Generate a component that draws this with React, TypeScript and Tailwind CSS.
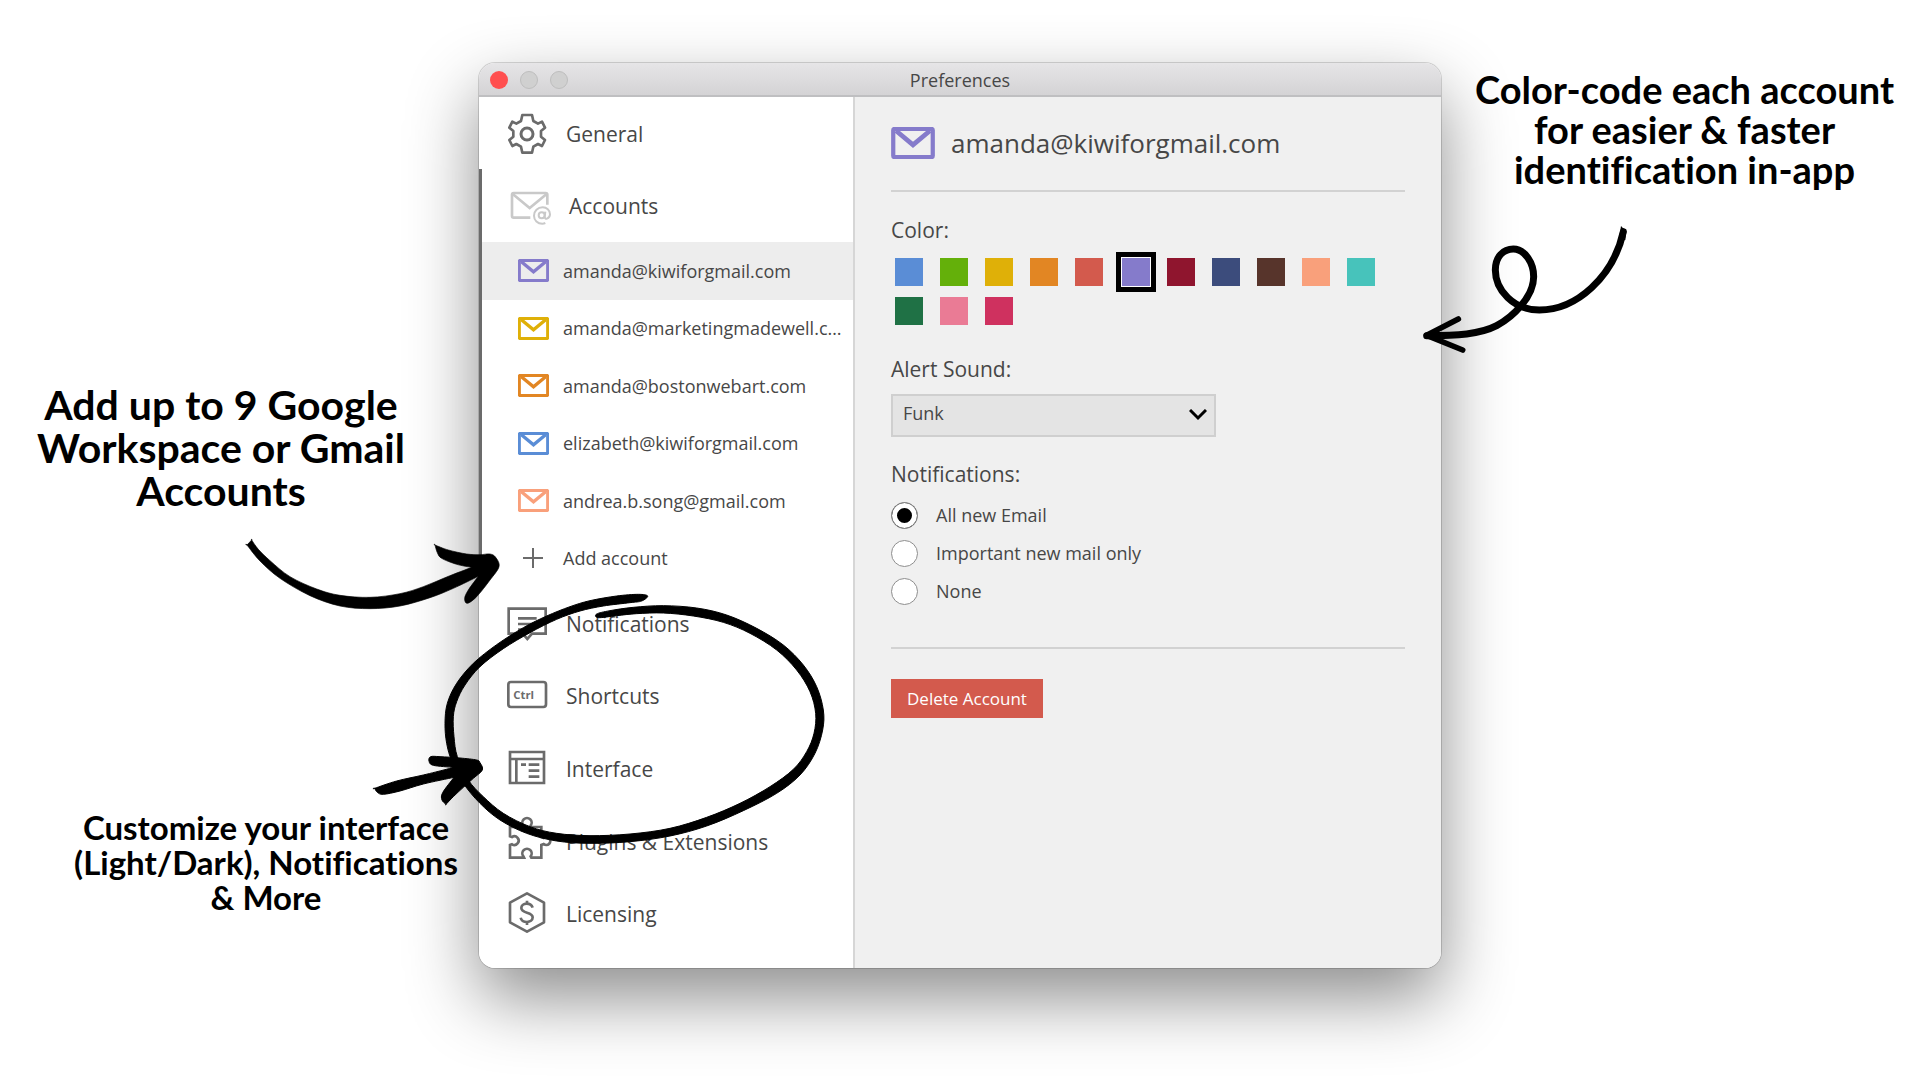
import type { ReactNode } from "react";

type Point = [number, number];

/* Closed Catmull-Rom curve through the given points, used for the brush strokes. */
function brush(points: Point[]): string {
  const n = points.length;
  let d = `M${points[0][0]} ${points[0][1]}`;
  for (let i = 0; i < n; i++) {
    const p0 = points[(i - 1 + n) % n];
    const p1 = points[i];
    const p2 = points[(i + 1) % n];
    const p3 = points[(i + 2) % n];
    d += `C${p1[0] + (p2[0] - p0[0]) / 6} ${p1[1] + (p2[1] - p0[1]) / 6} ${p2[0] - (p3[0] - p1[0]) / 6} ${p2[1] - (p3[1] - p1[1]) / 6} ${p2[0]} ${p2[1]}`;
  }
  return d + "Z";
}

const accountsArrow = brush([
  [741, 525], [741, 525], [755, 510], [755, 510], [775, 538], [810, 572], [870, 620], [950, 657], [1020, 676],
  [1110, 682], [1200, 671], [1270, 650], [1340, 621], [1415, 592], [1415, 592], [1370, 583], [1325, 565],
  [1312, 548], [1305, 525], [1305, 525], [1345, 540], [1400, 552], [1440, 554], [1470, 552], [1487, 562],
  [1497, 590], [1470, 630], [1430, 680], [1402, 700], [1394, 685], [1405, 660], [1435, 619], [1435, 619],
  [1360, 655], [1290, 683], [1200, 708], [1110, 716], [1020, 708], [930, 677], [840, 625], [780, 573],
]);

const ring = brush([
  [653, 78], [625, 73], [560, 78], [480, 92], [420, 110], [350, 138], [280, 173], [200, 224], [130, 280],
  [80, 340], [52, 400], [45, 460], [50, 520], [66, 575], [100, 640], [150, 700], [210, 750], [290, 790],
  [380, 813], [480, 820], [600, 815], [720, 798], [830, 768], [940, 722], [1040, 670], [1110, 615],
  [1155, 550], [1178, 480], [1180, 420], [1160, 350], [1120, 285], [1060, 225], [980, 175], [890, 135],
  [800, 114], [700, 107], [610, 112], [540, 122], [500, 132], [505, 143], [560, 137], [620, 131], [700, 129],
  [790, 138], [880, 157], [960, 190], [1040, 240], [1100, 300], [1140, 365], [1157, 430], [1152, 490],
  [1130, 545], [1090, 598], [1020, 650], [930, 700], [830, 742], [720, 775], [600, 792], [480, 797],
  [380, 790], [300, 770], [220, 730], [160, 680], [115, 630], [82, 560], [72, 500], [70, 440], [80, 395],
  [105, 345], [150, 290], [220, 236], [300, 188], [380, 148], [450, 123], [520, 108], [600, 98], [635, 93],
]);

const interfaceArrow = brush([
  [1004, 175], [1004, 175], [1070, 153], [1150, 135], [1215, 119], [1240, 112], [1240, 112], [1180, 106],
  [1167, 93], [1172, 80], [1200, 80], [1260, 84], [1310, 90], [1320, 98], [1327, 120], [1300, 145],
  [1270, 172], [1240, 200], [1218, 223], [1218, 223], [1206, 210], [1208, 188], [1242, 142], [1242, 142],
  [1150, 162], [1080, 183], [1030, 193], [1012, 187],
]);

const colors = {
  blue: "text-[#5a8dd6]",
  yellow: "text-[#dfb008]",
  orange: "text-[#e28623]",
  purple: "text-[#857bcb]",
  peach: "text-[#f9a07b]",
};

const accounts = [
  { email: "amanda@kiwiforgmail.com", color: colors.purple, active: true },
  { email: "amanda@marketingmadewell.com", color: colors.yellow, active: false },
  { email: "amanda@bostonwebart.com", color: colors.orange, active: false },
  { email: "elizabeth@kiwiforgmail.com", color: colors.blue, active: false },
  { email: "andrea.b.song@gmail.com", color: colors.peach, active: false },
];

const swatches = [
  { name: "Blue", bg: "bg-[#5a8dd6]" },
  { name: "Green", bg: "bg-[#64b00a]" },
  { name: "Yellow", bg: "bg-[#dfb008]" },
  { name: "Orange", bg: "bg-[#e28623]" },
  { name: "Red", bg: "bg-[#d35a4d]" },
  { name: "Purple", bg: "bg-[#857bcb]" },
  { name: "Maroon", bg: "bg-[#8f152e]" },
  { name: "Navy", bg: "bg-[#3c4c7c]" },
  { name: "Brown", bg: "bg-[#57342b]" },
  { name: "Peach", bg: "bg-[#f9a07b]" },
  { name: "Teal", bg: "bg-[#47c3bb]" },
  { name: "Forest", bg: "bg-[#1f7145]" },
  { name: "Pink", bg: "bg-[#ea7b95]" },
  { name: "Crimson", bg: "bg-[#cf315f]" },
];

function NavIcon({ viewBox, className = "text-[#6b6b6b]", children }: { viewBox: string; className?: string; children: ReactNode }) {
  return (
    <svg
      viewBox={viewBox}
      className={`h-[42px] w-10 shrink-0 overflow-visible ${className}`}
      fill="none"
      stroke="currentColor"
      strokeWidth="8"
      aria-hidden="true"
    >
      {children}
    </svg>
  );
}

function NavItem({ icon, label }: { icon: ReactNode; label: string }) {
  return (
    <button type="button" className="flex w-full items-center gap-[19px] pt-px pl-7 text-left text-[21px] leading-7">
      {icon}
      {label}
    </button>
  );
}

function Mail({ className }: { className: string }) {
  return (
    <svg viewBox="0 0 92 68" className={`shrink-0 ${className}`} fill="none" stroke="currentColor" aria-hidden="true">
      <rect x="4" y="4" width="84" height="60" rx="3" strokeWidth="9" />
      <path d="M10 8L46 38L82 8" strokeWidth="10" />
    </svg>
  );
}

const gear = (
  <NavIcon viewBox="111 186 120 126">
    <path
      strokeLinejoin="round"
      d="M157 192H186L190 210L204 218L216 212L225 230L213 240V257L225 267L216 285L204 279L190 287L186 305H157L153 287L139 279L127 285L118 267L130 257V240L118 230L127 212L139 218L153 210Z"
    />
    <circle cx="171" cy="249" r="18" strokeWidth="9" />
  </NavIcon>
);

const accountsIcon = (
  <NavIcon viewBox="120 405 120 126" className="text-[#c9c9c9]">
    <path d="M232 464V434Q232 429 227 429H131Q126 429 126 434V498Q126 503 131 503H181" />
    <path d="M129 433L179 474L229 433" />
    <circle cx="215" cy="496" r="9" strokeWidth="6" />
    <path d="M226 485L224 500Q225 508 231 506C237 504 240 499 240 493C240 480 230 472 218 472C203 472 192 483 192 497C192 511 203 521 217 521Q222 521 226 519" strokeWidth="6" />
  </NavIcon>
);

const lowerNav = [
  {
    label: "Notifications",
    icon: (
      <NavIcon viewBox="231 97 120 126">
        <path d="M236 114H347V189H306L292 205L278 189H236Z" />
        <path d="M264 143H320M264 160H320M264 177H300" />
      </NavIcon>
    ),
  },
  {
    label: "Shortcuts",
    icon: (
      <NavIcon viewBox="231 315 120 126">
        <rect x="235" y="336" width="113" height="75" rx="8" />
        <text x="250" y="388" fontSize="34" fontWeight="700" fill="currentColor" stroke="none">
          Ctrl
        </text>
      </NavIcon>
    ),
  },
  {
    label: "Interface",
    icon: (
      <NavIcon viewBox="231 533 120 126">
        <path d="M240 545H342V638H240ZM240 566H342M259 566V638" />
        <path d="M273 583H288M296 583H328M296 601H328M296 619H328" />
      </NavIcon>
    ),
  },
  {
    label: "Plugins & Extensions",
    icon: (
      <NavIcon viewBox="111 180 120 126">
        <path d="M120 198H158L160 194A14 14 0 1 1 182 194L184 198H214V228L221 231A12 12 0 1 1 221 249L214 252V290H184L182 286A14 14 0 1 0 160 286L162 290H120V252L126 250A13 13 0 1 0 126 228L120 226Z" />
      </NavIcon>
    ),
  },
  {
    label: "Licensing",
    icon: (
      <NavIcon viewBox="111 398 120 126">
        <path d="M171 399L222 427V486L171 514L120 486V427Z" strokeLinejoin="round" />
        <path d="M188 442C185 433 178 430 170 430C160 430 154 436 154 443C154 461 188 453 188 471C188 480 180 485 171 485C161 485 154 481 152 472M171 421V431M171 484V494" />
      </NavIcon>
    ),
  },
];

function Sidebar() {
  return (
    <nav className="w-[376px] shrink-0 border-r-2 border-[#d6d6d6] bg-white pb-[18px]">
      <div className="grid h-[72px]">
        <NavItem icon={gear} label="General" />
      </div>
      <div className="border-l-[3px] border-[#6b6b6b]">
        <div className="grid h-[73px]">
          <NavItem icon={accountsIcon} label="Accounts" />
        </div>
        <ul className="grid h-[345px] grid-rows-6 text-[18px] leading-6">
          {accounts.map((a) => (
            <li key={a.email} className={a.active ? "grid bg-[#ededed]" : "grid"}>
              <button type="button" className="flex min-w-0 items-center gap-[14px] pr-2 pl-9 text-left">
                <Mail className={`h-[23px] w-[31px] ${a.color}`} />
                <span className="truncate">{a.email}</span>
              </button>
            </li>
          ))}
          <li className="grid">
            <button type="button" className="flex items-center gap-[14px] pl-9 text-left">
              <svg viewBox="0 0 31 23" className="h-[23px] w-[31px] text-[#6b6b6b]" stroke="currentColor" strokeWidth="2" aria-hidden="true">
                <path d="M5 11H25M15 1V21" />
              </svg>
              Add account
            </button>
          </li>
        </ul>
      </div>
      <div className="grid h-[363px] grid-rows-5">
        {lowerNav.map((n) => (
          <NavItem key={n.label} icon={n.icon} label={n.label} />
        ))}
      </div>
    </nav>
  );
}

function AccountPane() {
  return (
    <section className="min-w-0 flex-1 bg-[#f0f0f0] px-9">
      <header className="flex h-[95px] items-center gap-4 border-b-2 border-[#d2d2d2] pb-0.5">
        <Mail className={`h-8 w-11 ${colors.purple}`} />
        <h2 className="text-[26px] leading-9">amanda@kiwiforgmail.com</h2>
      </header>

      <fieldset className="mt-6">
        <legend className="text-[21px] leading-7">Color:</legend>
        <div className="mt-[14px] flex flex-wrap gap-x-[17px] gap-y-[11px] pl-1">
          {swatches.map((s) => (
            <input
              key={s.name}
              type="radio"
              name="color"
              aria-label={s.name}
              defaultChecked={s.name === "Purple"}
              className={`size-7 appearance-none checked:ml-0.5 checked:shadow-[0_0_0_1px_#fff,0_0_0_6px_#000] ${s.bg}`}
            />
          ))}
        </div>
      </fieldset>

      <label htmlFor="sound" className="mt-[30px] block text-[21px] leading-7">
        Alert Sound:
      </label>
      <div className="relative mt-[11px] w-[325px]">
        <select id="sound" defaultValue="Funk" className="h-[43px] w-full appearance-none border-2 border-[#cfcfcf] bg-[#e4e4e4] px-[10px] pb-1 text-[18px]">
          <option>Funk</option>
        </select>
        <svg viewBox="0 0 18 12" className="pointer-events-none absolute top-[15px] right-[9px] h-3 w-[18px]" fill="none" stroke="#000" strokeWidth="3" aria-hidden="true">
          <path d="M1 1L9 9L17 1" />
        </svg>
      </div>

      <fieldset className="mt-[23px]">
        <legend className="mb-2 text-[21px] leading-7">Notifications:</legend>
        {["All new Email", "Important new mail only", "None"].map((o, i) => (
          <label key={o} className="flex h-[38px] items-center gap-[18px] text-[18px]">
            <input
              type="radio"
              name="notify"
              defaultChecked={i === 0}
              className="size-[27px] appearance-none rounded-full border border-[#8e8e8e] bg-white checked:bg-black checked:shadow-[inset_0_0_0_5px_#fff]"
            />
            {o}
          </label>
        ))}
      </fieldset>

      <hr className="mt-[37px] border-t-2 border-[#d2d2d2]" />
      <button type="button" className="mt-[30px] h-[39px] bg-[#d35a4d] px-4 text-[17px] leading-6 text-white">
        Delete Account
      </button>
    </section>
  );
}

export default function App() {
  return (
    <main className="grid min-h-screen grid-cols-[479fr_962fr_479fr] items-start overflow-hidden bg-white pt-[63px] pb-28 font-['Lato',sans-serif] font-bold text-black [font-variant-ligatures:none]">
      <div className="text-center">
        <p className="mt-80 pr-[37px] text-[41px] leading-[43px]">
          Add up to 9 Google
          <br />
          Workspace or Gmail
          <br />
          Accounts
        </p>
        <p className="mt-[298px] pl-[53px] text-[33px] leading-[35px]">
          Customize your interface
          <br />
          (Light/Dark), Notifications
          <br />
          &amp; More
        </p>
      </div>

      <div className="relative font-['Open_Sans',sans-serif] font-normal text-[#474747]">
        <div className="overflow-hidden rounded-2xl shadow-[0_0_0_1px_rgba(0,0,0,0.15),0_30px_70px_rgba(0,0,0,0.45)]">
          <div className="grid h-[34px] grid-cols-[1fr_auto_1fr] items-center border-b-2 border-[#bfbfc1] bg-linear-to-b from-[#e6e5e7] to-[#d4d3d5] px-[11px] pt-0.5">
            <div className="flex gap-3">
              <button type="button" aria-label="Close" className="size-[18px] rounded-full bg-[#ff4f4f]" />
              <button type="button" aria-label="Minimize" className="size-[18px] rounded-full border border-[#bebebe] bg-[#d0d0d0]" />
              <button type="button" aria-label="Zoom" className="size-[18px] rounded-full border border-[#bebebe] bg-[#d0d0d0]" />
            </div>
            <h1 className="text-[18px] leading-6">Preferences</h1>
          </div>
          <div className="flex">
            <Sidebar />
            <AccountPane />
          </div>
        </div>

        <svg viewBox="720 480 795 255" className="pointer-events-none absolute top-[467px] -left-[239px] w-[265px]" fill="#000" stroke="#000" strokeWidth="2" aria-hidden="true">
          <path d={accountsArrow} />
        </svg>
        <svg viewBox="30 60 1170 780" className="pointer-events-none absolute top-[527px] -left-[39px] w-[390px]" fill="#000" stroke="#000" strokeWidth="3" aria-hidden="true">
          <path d={ring} />
        </svg>
        <svg viewBox="990 60 360 180" className="pointer-events-none absolute top-[687px] -left-[109px] w-[120px]" fill="#000" stroke="#000" strokeWidth="3" aria-hidden="true">
          <path d={interfaceArrow} />
        </svg>
        <svg viewBox="60 510 645 420" className="pointer-events-none absolute top-[157px] -right-[194px] w-[215px]" fill="none" stroke="#000" strokeLinecap="round" aria-hidden="true">
          <path d="M670 545C640 680 530 780 418 780C340 780 286 720 286 660C286 620 310 597 340 597C375 597 401 640 401 680C401 740 340 800 290 827C240 853 170 857 80 857" strokeWidth="21" />
          <path d="M175 807L80 856L188 900" strokeWidth="17" strokeLinejoin="round" />
          <path d="M663 528L679 545L676 570L655 575Z" fill="#000" stroke="none" />
        </svg>
      </div>

      <p className="mt-[6px] pl-2 text-center text-[38px] leading-10">
        Color-code each account
        <br />
        for easier &amp; faster
        <br />
        identification in-app
      </p>
    </main>
  );
}
